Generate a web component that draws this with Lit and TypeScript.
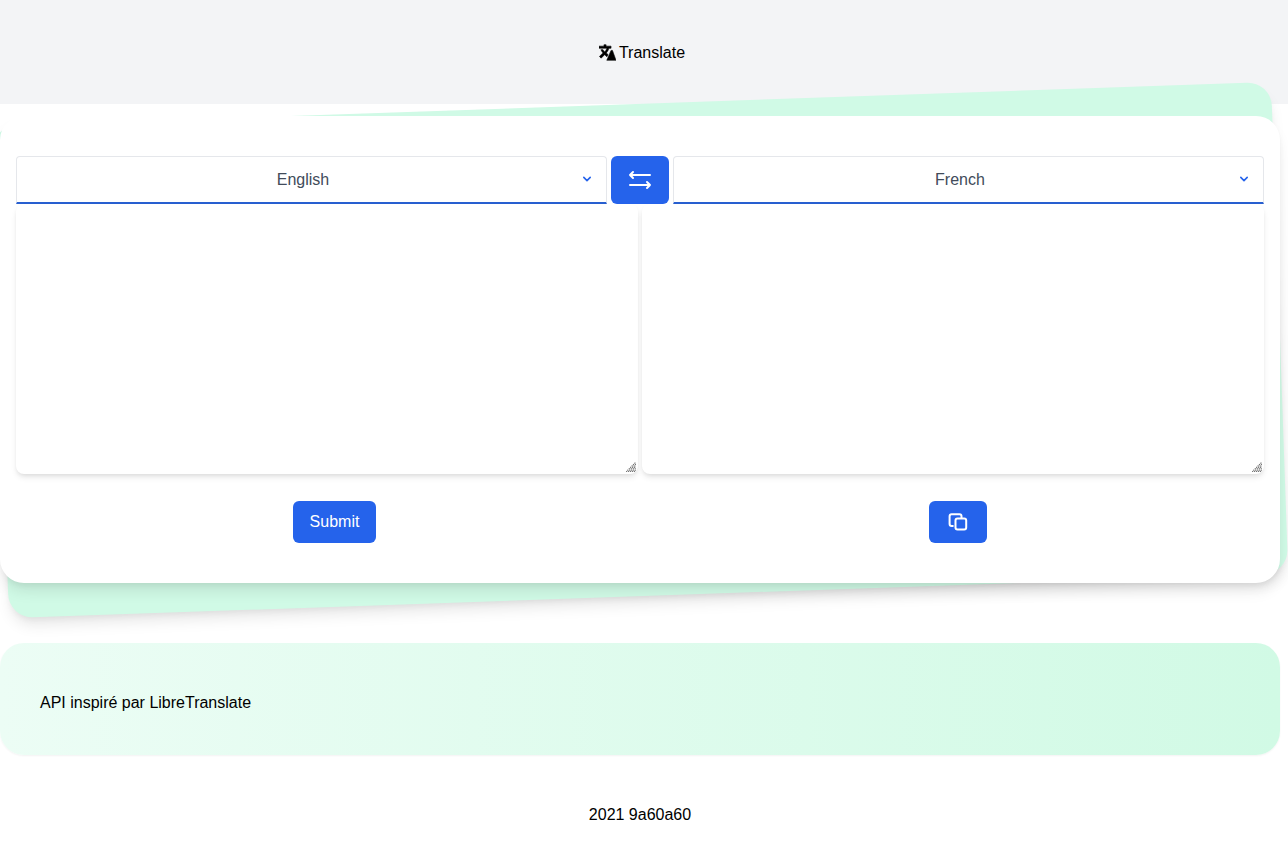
import { LitElement, html, css } from "lit";
import { customElement } from "lit/decorators.js";

const chevron = html`<svg class="chev" viewBox="0 0 20 20" fill="none" stroke="currentColor" stroke-width="2" stroke-linecap="round" stroke-linejoin="round"><path d="M6 8l4 4 4-4"/></svg>`;
const grip = html`<svg class="grip" viewBox="0 0 10 10" fill="none" stroke="#6b6b6b" stroke-width="1.1" stroke-dasharray="1.2 .8"><path d="M0 10L10 0M2 10L10 2M4 10L10 4M6 10L10 6M8 10L10 8"/></svg>`;

@customElement("app-root")
export class AppRoot extends LitElement {
  static styles = css`
    :host { display: block; font-family: "Liberation Sans", Arial, sans-serif; font-size: 16px; color: #000; background: #fff; height: 850px; overflow: hidden; }
    * { box-sizing: border-box; }
    .top { height: 104px; background: #f3f4f6; display: flex; align-items: center; justify-content: center; gap: 3px; padding: 2px 4px 0 0; }
    .top svg { width: 17px; height: 17px; display: block; margin-top: -2px; }
    .wrap { width: 1280px; }
    .stage { position: relative; padding: 12px 0 13px; }
    .tilt { position: absolute; inset: 0; background: #d0fae6; border-radius: 24px; transform: rotate(-2deg); box-shadow: 0 10px 15px -3px rgba(0,0,0,.1), 0 4px 6px -2px rgba(0,0,0,.05); }
    .card { position: relative; background: #fff; border-radius: 24px; padding: 40px 16px; height: 467px; box-shadow: 0 10px 15px -3px rgba(0,0,0,.1), 0 4px 6px -2px rgba(0,0,0,.05); }
    .bar { display: flex; gap: 4px; height: 48px; }
    .select { flex: 1; display: flex; align-items: center; justify-content: center; padding-right: 17px; position: relative; color: #414b5a; background: #fff; border: 1px solid #e5e7eb; border-bottom: 2px solid #285fd0; border-radius: 4px 4px 0 0; }
    .chev { position: absolute; right: 11px; top: 14px; width: 16px; height: 16px; color: #2563eb; }
    .btn { background: #2563eb; color: #fff; border: none; border-radius: 6px; display: flex; align-items: center; justify-content: center; font: inherit; padding: 0; }
    .swap { width: 58px; }
    .swap svg { width: 24px; height: 24px; }
    .panes { display: grid; grid-template-columns: 1fr 1fr; gap: 4px; }
    .pane { display: flex; flex-direction: column; align-items: center; }
    .field { position: relative; width: 100%; }
    textarea { display: block; width: 100%; height: 270px; margin: 0; border: none; outline: none; resize: none; background: #fff; border-radius: 8px; box-shadow: 0 4px 6px -1px rgba(0,0,0,.1), 0 2px 4px -1px rgba(0,0,0,.06); }
    .grip { position: absolute; right: 2px; bottom: 2px; width: 10px; height: 10px; pointer-events: none; }
    .actions { height: 42px; margin-top: 27px; }
    .submit { width: 83px; height: 42px; margin-left: 15px; }
    .copy { width: 58px; height: 42px; margin-left: 10px; }
    .copy svg { width: 24px; height: 24px; }
    .note { margin-top: 47px; height: 112px; border-radius: 24px; background: linear-gradient(to right, #ecfdf5, #d1fae5); box-shadow: 0 1px 2px rgba(0,0,0,.05); display: flex; align-items: center; padding: 8px 40px 0; }
    .foot { height: 119px; display: flex; align-items: center; justify-content: center; }
  `;

  render() {
    return html`
      <header class="top">
        <svg viewBox="0 0 24 24" fill="currentColor" stroke="currentColor" stroke-width="0.8" stroke-linejoin="round" aria-hidden="true"><path d="M12.87 15.07l-2.54-2.51.03-.03c1.74-1.94 2.98-4.17 3.71-6.53H17V3h-7V1H7v2H0v3h11.17C10.5 7.92 9.44 9.75 8 11.35 7.07 10.32 6.3 9.19 5.69 8h-3c.73 1.63 1.73 3.17 2.98 4.56L.58 17.58 3 20l5-5 3.11 3.11zM17 9h2l5 14H11z"/></svg>
        <span>Translate</span>
      </header>
      <div class="wrap">
        <section class="stage">
          <div class="tilt"></div>
          <div class="card">
            <div class="bar">
              <div class="select">English ${chevron}</div>
              <button class="btn swap" aria-label="Swap">
                <svg viewBox="0 0 24 24" fill="none" stroke="currentColor" stroke-width="2" stroke-linecap="round" stroke-linejoin="round"><path d="M22 7H2M5 4L2 7l3 3"/><path d="M2 17h20M19 14l3 3-3 3"/></svg>
              </button>
              <div class="select">French ${chevron}</div>
            </div>
            <div class="panes">
              <div class="pane">
                <div class="field"><textarea></textarea>${grip}</div>
                <div class="actions"><button class="btn submit">Submit</button></div>
              </div>
              <div class="pane">
                <div class="field"><textarea></textarea>${grip}</div>
                <div class="actions">
                  <button class="btn copy" aria-label="Copy">
                    <svg viewBox="0 0 24 24" fill="none" stroke="currentColor" stroke-width="2" stroke-linecap="round" stroke-linejoin="round"><rect x="9.5" y="8.5" width="10.7" height="11" rx="2"/><path d="M15.5 8V6.2a2 2 0 0 0-2-2H5.6a2 2 0 0 0-2 2V14a2 2 0 0 0 2 2h1.2"/></svg>
                  </button>
                </div>
              </div>
            </div>
          </div>
        </section>
        <section class="note">API inspiré par LibreTranslate</section>
        <footer class="foot">2021 9a60a60</footer>
      </div>
    `;
  }
}
